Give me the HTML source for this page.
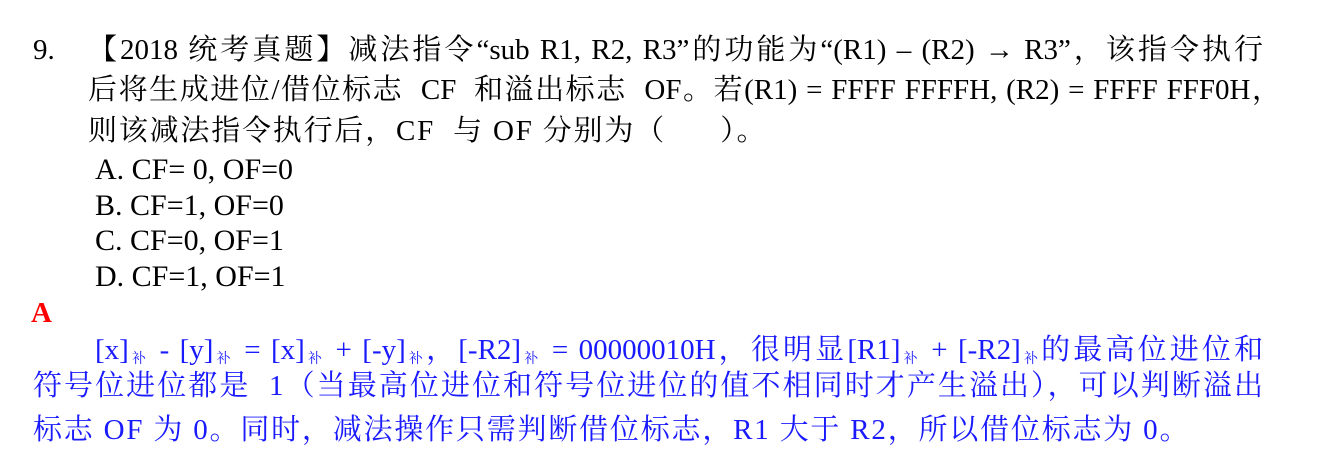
<!DOCTYPE html>
<html><head><meta charset="utf-8"><style>
body{margin:0;width:1326px;height:460px;background:#fff;overflow:hidden;position:relative;
font-family:"Liberation Serif","Noto Serif CJK SC",serif;font-size:29px;color:#000;letter-spacing:1.8px}
.l{position:absolute;line-height:36px;white-space:nowrap}
.j{text-align:justify;text-align-last:justify;letter-spacing:0}
.b{color:#1a1aff}
.s{font-size:14px;vertical-align:-4px}
.o{font-size:30px;letter-spacing:0}
</style></head><body>
<div class="l" style="left:33px;top:32px;letter-spacing:0">9.</div>
<div class="l j" style="left:88px;top:32px;width:1175px">【2018 统考真题】减法指令“sub R1, R2, R3”的功能为“(R1) – (R2) → R3”，该指令执行</div>
<div class="l j" style="left:88px;top:72px;width:1193px">后将生成进位/借位标志&nbsp; CF&nbsp; 和溢出标志&nbsp; OF。若(R1) = FFFF FFFFH, (R2) = FFFF FFF0H，</div>
<div class="l" style="left:88px;top:113px">则该减法指令执行后，CF&nbsp; 与 OF 分别为（&nbsp;&nbsp;&nbsp;&nbsp;&nbsp;&nbsp;）。</div>
<div class="l o" style="left:95px;top:152px">A. CF= 0, OF=0</div>
<div class="l o" style="left:95px;top:188px">B. CF=1, OF=0</div>
<div class="l o" style="left:95px;top:223px">C. CF=0, OF=1</div>
<div class="l o" style="left:95px;top:259px">D. CF=1, OF=1</div>
<div class="l" style="left:31px;top:295px;color:#f00;font-weight:bold">A</div>
<div class="l b j" style="left:95px;top:332px;width:1168px">[x]<span class="s">补</span> - [y]<span class="s">补</span> = [x]<span class="s">补</span> + [-y]<span class="s">补</span>，[-R2]<span class="s">补</span> = 00000010H，很明显[R1]<span class="s">补</span> + [-R2]<span class="s">补</span>的最高位进位和</div>
<div class="l b j" style="left:33px;top:368px;width:1230px">符号位进位都是&nbsp; 1（当最高位进位和符号位进位的值不相同时才产生溢出），可以判断溢出</div>
<div class="l b" style="left:33px;top:412px">标志 OF 为 0。同时，减法操作只需判断借位标志，R1 大于 R2，所以借位标志为 0。</div>
</body></html>
